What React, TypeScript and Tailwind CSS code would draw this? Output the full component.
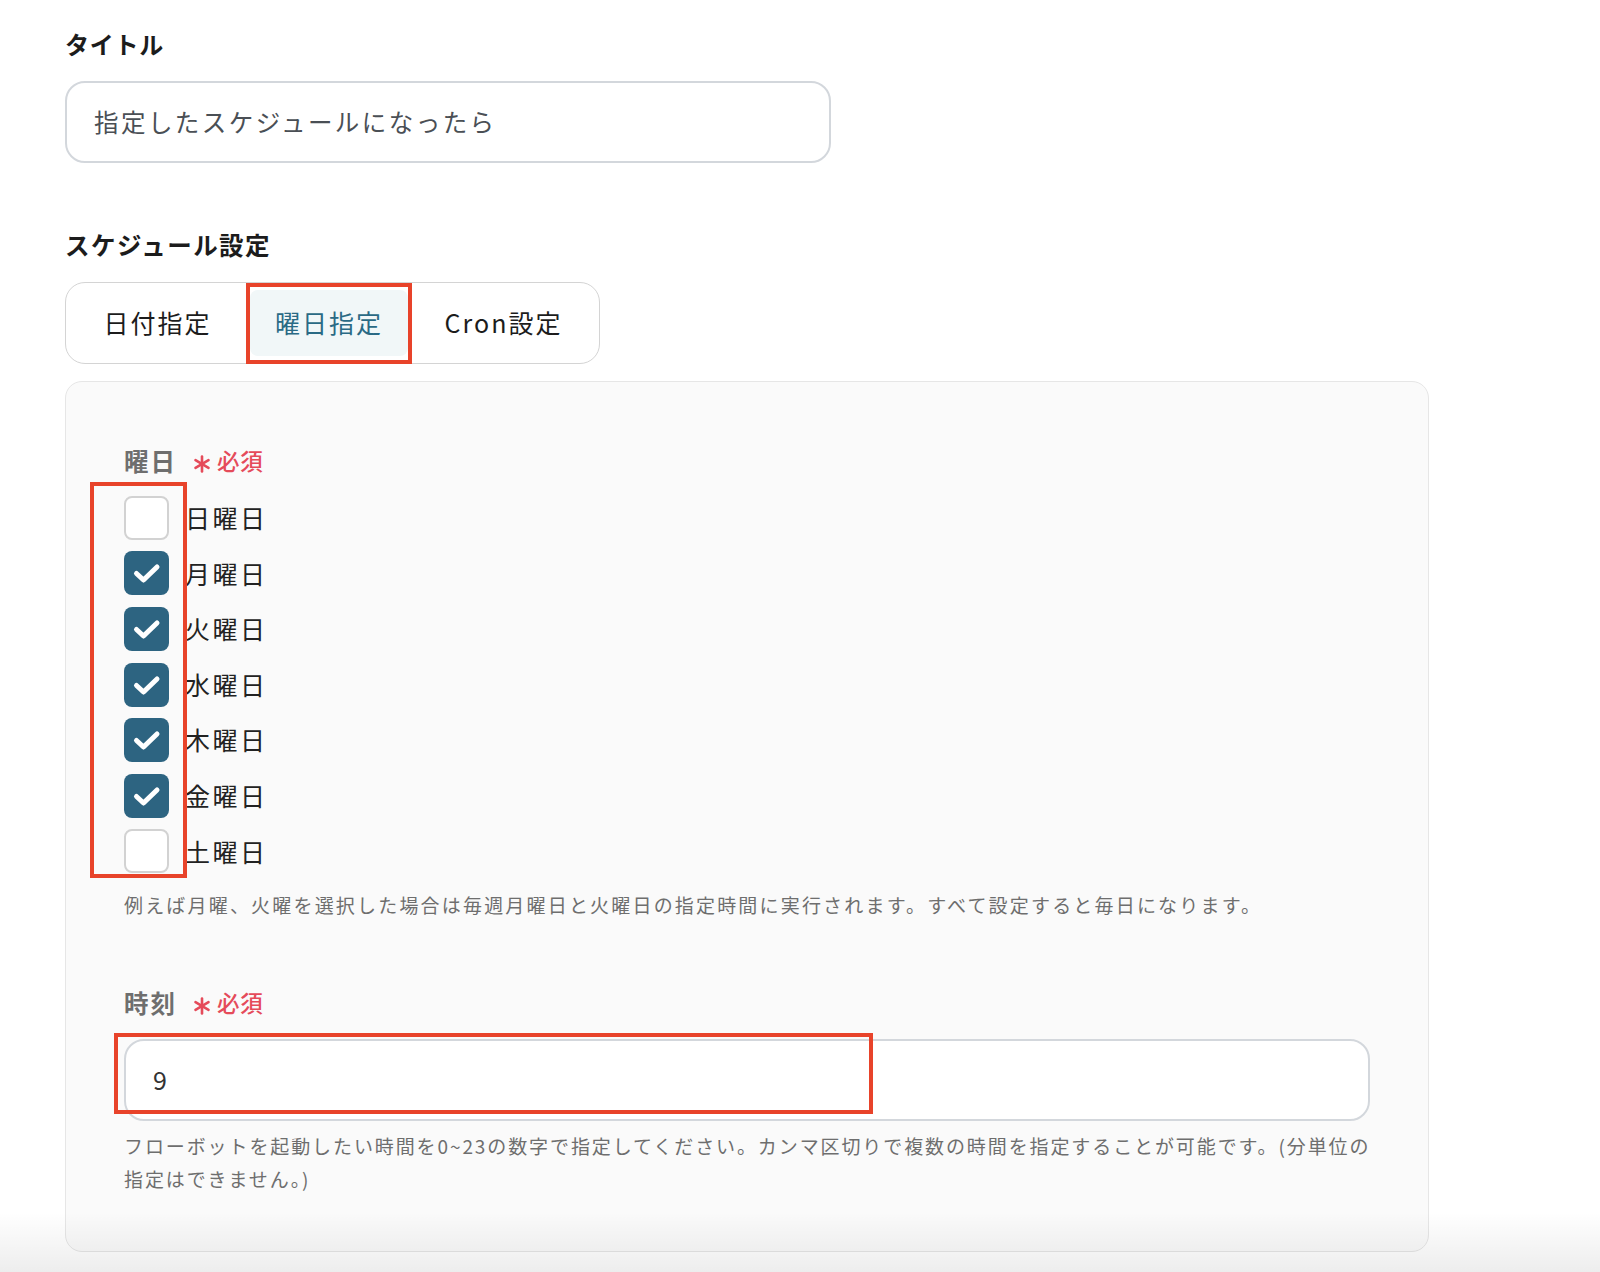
import React from "react"

const days = [
  { label: "日曜日", checked: false },
  { label: "月曜日", checked: true },
  { label: "火曜日", checked: true },
  { label: "水曜日", checked: true },
  { label: "木曜日", checked: true },
  { label: "金曜日", checked: true },
  { label: "土曜日", checked: false },
]

function Required() {
  return (
    <span className="ml-[16px] flex items-center text-[22.5px] font-medium tracking-[0.04em] text-[#e54b5a]">
      <svg width="18" height="18" viewBox="0 0 18 18" className="mr-[6px] mt-[6px]">
        <g stroke="#e54b5a" strokeWidth="2.6" strokeLinecap="round">
          <line x1="9" y1="1.5" x2="9" y2="16.5" />
          <line x1="2.5" y1="5.2" x2="15.5" y2="12.8" />
          <line x1="2.5" y1="12.8" x2="15.5" y2="5.2" />
        </g>
      </svg>
      必須
    </span>
  )
}

function Checkbox({ checked }: { checked: boolean }) {
  if (checked) {
    return (
      <div className="w-[45px] h-[44px] rounded-[8px] bg-[#2d6481] flex items-center justify-center">
        <svg width="45" height="44" viewBox="0 0 45 44">
          <path d="M12.5 22.5 L19.5 29 L33 16" fill="none" stroke="white" strokeWidth="5" strokeLinecap="round" strokeLinejoin="round" />
        </svg>
      </div>
    )
  }
  return <div className="w-[45px] h-[44px] rounded-[8px] bg-white border-2 border-[#d2d2d2]" />
}

export default function App() {
  return (
    <div className="relative min-h-[1272px] bg-white font-['Noto_Sans_CJK_JP',sans-serif] text-[#1c1c1c] overflow-hidden">
      <div className="pl-[65px] pt-[28px]">
        <h2 className="text-[24px] leading-[32px] font-bold tracking-[0.03em]">タイトル</h2>
        <div className="mt-[21px] w-[766px] h-[82px] rounded-[20px] border-2 border-[#d3d7dc] bg-white flex items-center pl-[27px] text-[24.5px] tracking-[0.1em] text-[#4a4f55]">
          指定したスケジュールになったら
        </div>

        <h2 className="mt-[66px] text-[24.5px] leading-[32px] font-bold tracking-[0.06em]">スケジュール設定</h2>
        <div className="relative mt-[21px] w-[535px] h-[82px] rounded-[20px] border-[1.5px] border-[#d4d4d4] bg-white flex items-center pl-[6px] text-[25px] tracking-[0.08em]">
          <div className="w-[171px] h-[66px] flex items-center justify-center">日付指定</div>
          <div className="ml-[7px] w-[158px] h-[66px] rounded-[8px] bg-[#f1f7f8] text-[#2a6a85] flex items-center justify-center">曜日指定</div>
          <div className="flex-1 h-[66px] flex items-center justify-center">Cron設定</div>
          <div className="absolute left-[180px] top-[0px] w-[166px] h-[81px] border-[4px] border-[#e8432a]" />
        </div>

        <div className="relative mt-[17px] w-[1364px] rounded-[17px] border-[1.5px] border-[#e6e6e6] bg-[#fafafa] pt-[63px] pb-[56px] pl-[58px] pr-[58px]">
          <div className="flex items-center h-[32px]">
            <span className="text-[24.5px] font-semibold tracking-[0.08em] text-[#6e6e6e]">曜日</span>
            <Required />
          </div>
          <div className="mt-[13px] flex flex-col">
            {days.map((d) => (
              <div key={d.label} className="flex items-center h-[55.6px]">
                <Checkbox checked={d.checked} />
                <span className="ml-[16px] text-[25px] tracking-[0.1em] text-[#222]">{d.label}</span>
              </div>
            ))}
          </div>
          <div className="absolute left-[24px] top-[100px] w-[97px] h-[396px] border-[4px] border-[#e8432a]" />
          <p className="mt-[10px] text-[19px] leading-[32px] tracking-[0.115em] text-[#6e6e6e] whitespace-nowrap">
            例えば月曜、火曜を選択した場合は毎週月曜日と火曜日の指定時間に実行されます。すべて設定すると毎日になります。
          </p>

          <div className="mt-[66px] flex items-center h-[32px]">
            <span className="text-[24.5px] font-semibold tracking-[0.08em] text-[#6e6e6e]">時刻</span>
            <Required />
          </div>
          <div className="relative mt-[20px]">
            <div className="h-[82px] rounded-[20px] border-2 border-[#d3d7dc] bg-white flex items-center pl-[27px] text-[25px] text-[#333]">
              9
            </div>
            <div className="absolute -left-[10px] -top-[6px] w-[759px] h-[81px] border-[4px] border-[#e8432a]" />
          </div>
          <p className="mt-[9px] text-[19px] leading-[32.5px] tracking-[0.1em] text-[#6e6e6e]">
            <span className="block whitespace-nowrap">フローボットを起動したい時間を0~23の数字で指定してください。カンマ区切りで複数の時間を指定することが可能です。(分単位の</span>
            <span className="block whitespace-nowrap">指定はできません。)</span>
          </p>
        </div>
      </div>
      <div className="pointer-events-none absolute left-0 right-0 bottom-0 h-[60px] bg-linear-to-b from-transparent to-[rgba(0,0,0,0.07)]" />
    </div>
  )
}
